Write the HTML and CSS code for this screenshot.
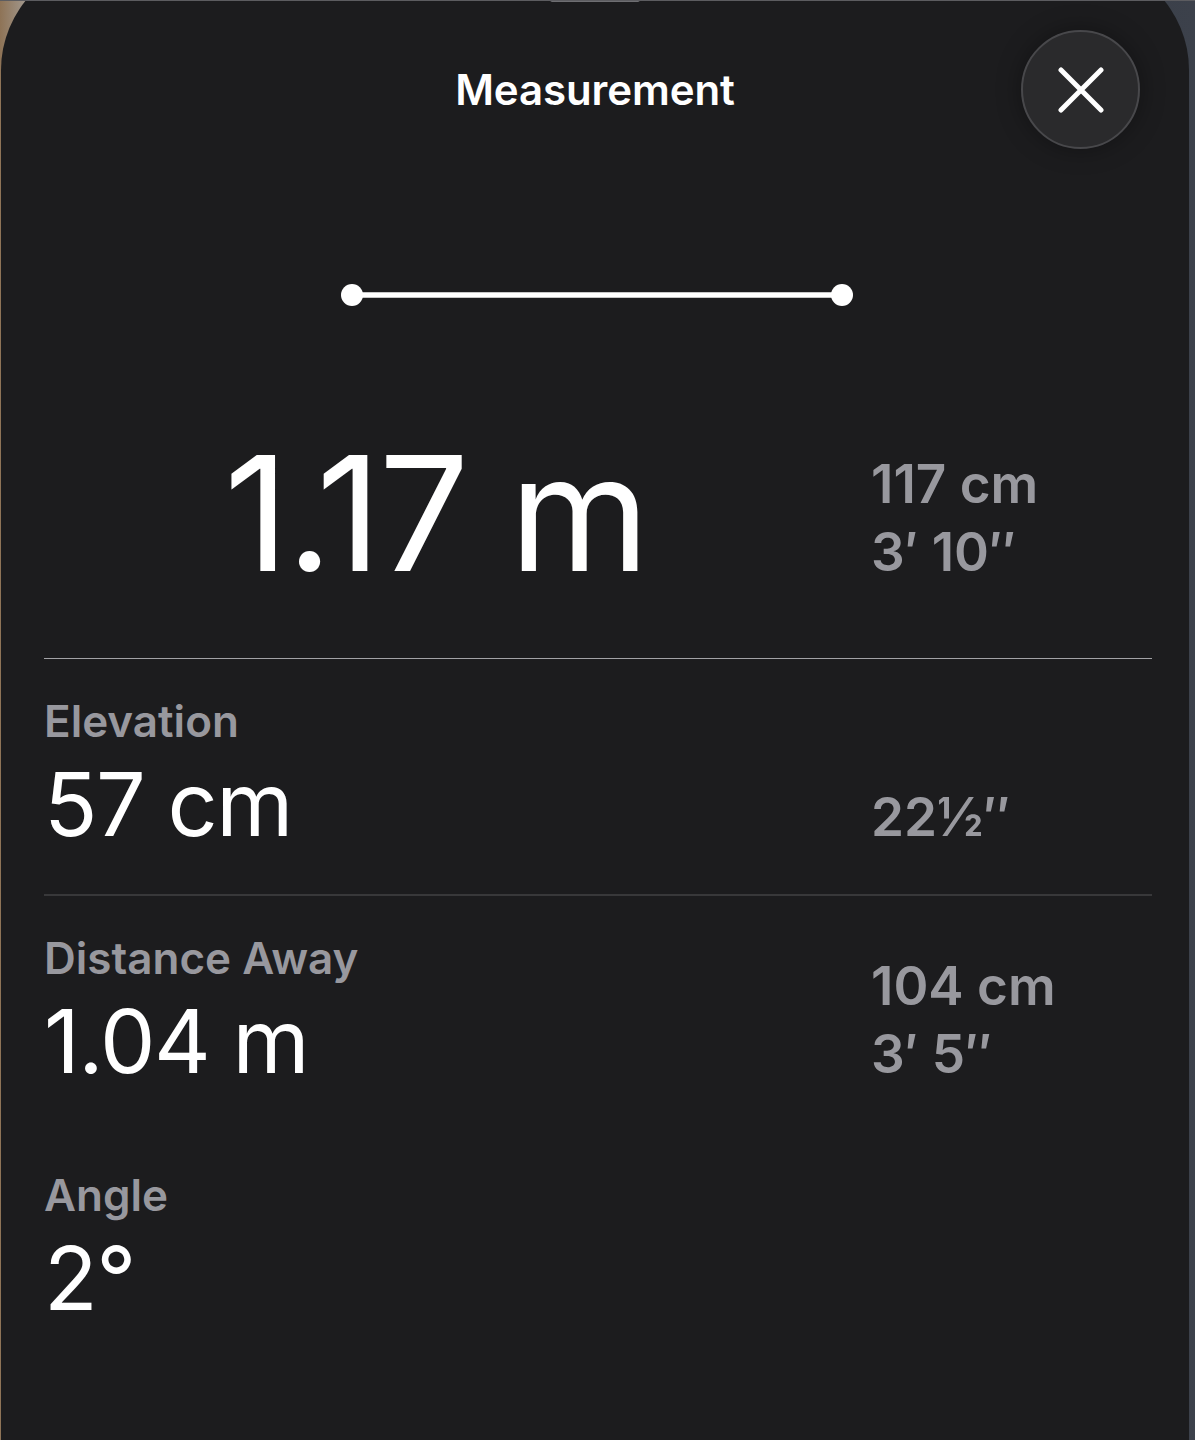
FILE: index.html
```html
<!DOCTYPE html>
<html lang="en">
<head>
    <meta charset="UTF-8">
    <meta name="viewport" content="width=device-width, initial-scale=1.0">
    <title>Measurement</title>
    <link rel="stylesheet" href="styles.css">
</head>
<body>
    <div class="sheet">
        <div class="grabber"></div>
        <header class="sheet-head">
            <span></span>
            <h1>Measurement</h1>
            <button class="close" aria-label="Close">
                <svg width="46" height="46" viewBox="0 0 46 46">
                    <path d="M3 3 L43 43 M43 3 L3 43" stroke="#fff" stroke-width="5" stroke-linecap="round" fill="none"/>
                </svg>
            </button>
        </header>

        <div class="figure">
            <svg width="514" height="30" viewBox="0 0 514 30">
                <line x1="12" y1="15" x2="502" y2="15" stroke="#fff" stroke-width="5.5"/>
                <circle cx="12" cy="15" r="11" fill="#fff"/>
                <circle cx="502" cy="15" r="11" fill="#fff"/>
            </svg>
        </div>

        <section class="main-row">
            <div class="big">1.17 m</div>
            <div class="alt">
                <div>117 cm</div>
                <div>3′ 10″</div>
            </div>
        </section>

        <section class="row first">
            <div class="cell">
                <div class="label">Elevation</div>
                <div class="value">57 cm</div>
            </div>
            <div class="alt">
                <div>22½″</div>
            </div>
        </section>

        <section class="row">
            <div class="cell">
                <div class="label">Distance Away</div>
                <div class="value">1.04 m</div>
            </div>
            <div class="alt">
                <div>104 cm</div>
                <div>3′ 5″</div>
            </div>
        </section>

        <section class="row last">
            <div class="cell">
                <div class="label">Angle</div>
                <div class="value">2°</div>
            </div>
            <div class="alt"></div>
        </section>
    </div>
</body>
</html>
```

FILE: styles.css
```css
body {
    margin: 0;
    padding: 0;
    height: 1440px;
    overflow: hidden;
    font-family: 'Inter', 'Noto Sans', sans-serif;
    background: linear-gradient(to right, #8e7356 0%, #a9a6a3 3%, #2f333b 50%, #3c414b 100%);
    border-top: 1px solid #5c5c60;
    box-sizing: border-box;
}
.sheet {
    margin: -41px 6px 0 1px;
    padding-top: 37px;
    height: 1478px;
    background: #1c1c1e;
    border-radius: 110px 110px 0 0;
    color: #fff;
}
.grabber {
    width: 90px;
    height: 5px;
    margin: 0 auto;
    border-radius: 3px;
    background: #6e6e72;
}
.sheet-head {
    display: grid;
    grid-template-columns: 1fr auto 1fr;
    align-items: center;
    padding: 0 49px;
    margin-top: 28px;
}
.sheet-head h1 {
    margin: 0;
    font-size: 42px;
    font-weight: 600;
    letter-spacing: -0.1px;
}
.close {
    justify-self: end;
    width: 119px;
    height: 119px;
    border-radius: 50%;
    background: #2a2a2c;
    border: 2px solid #48484b;
    box-shadow: 0 0 24px rgba(0, 0, 0, 0.35);
    display: flex;
    align-items: center;
    justify-content: center;
    padding: 0;
}
.figure {
    display: flex;
    justify-content: center;
    margin-top: 131px;
    padding-left: 4px;
}
.figure svg {
    display: block;
}
.main-row,
.row {
    display: grid;
    grid-template-columns: 827px 1fr;
    align-items: last baseline;
    margin: 0 37px 0 43px;
}
.main-row {
    margin-top: 123px;
    margin-bottom: 65px;
}
.big {
    font-size: 160px;
    line-height: 1;
    font-weight: 400;
    letter-spacing: -2.5px;
    text-align: center;
    padding-right: 44px;
}
.alt {
    color: #98989e;
    font-size: 53px;
    font-weight: 600;
    line-height: 68px;
}
.row {
    padding-top: 35px;
    padding-bottom: 43px;
    border-top: 2px solid #38383a;
}
.row.first {
    border-top: 1px solid #a2a2a6;
}
.row.last {
    border-top-color: transparent;
}
.label {
    color: #98989e;
    font-size: 44px;
    font-weight: 600;
    line-height: 54px;
}
.value {
    font-size: 88px;
    line-height: 1;
    margin-top: 12px;
    font-weight: 400;
    letter-spacing: -1.5px;
}
```
